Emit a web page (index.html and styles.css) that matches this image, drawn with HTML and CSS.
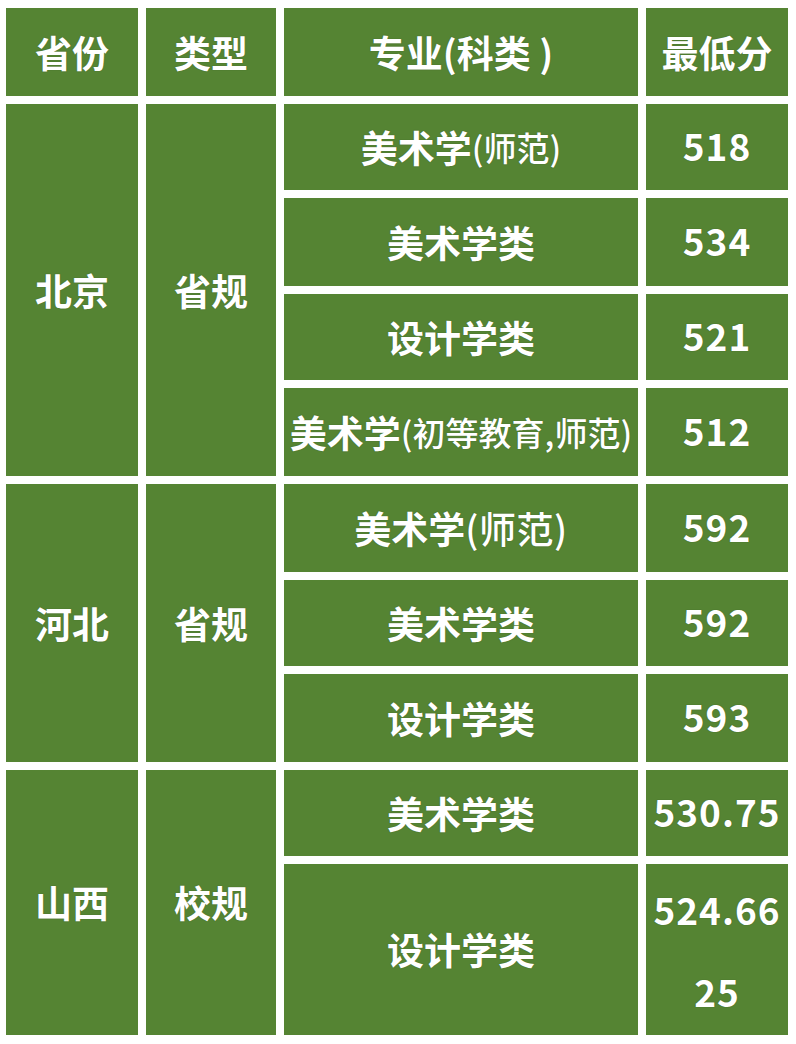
FILE: index.html
```html
<!DOCTYPE html>
<html lang="zh-CN">
<head>
<meta charset="utf-8">
<title>分数线</title>
<link rel="stylesheet" href="styles.css">
</head>
<body>
<div class="table">
  <div class="cell head">省份</div>
  <div class="cell head">类型</div>
  <div class="cell head">专业(科类 )</div>
  <div class="cell head">最低分</div>

  <div class="cell prov span4a">北京</div>
  <div class="cell prov span4b">省规</div>
  <div class="cell major">美术学<span class="sub">(师范)</span></div>
  <div class="cell num">518</div>
  <div class="cell major">美术学类</div>
  <div class="cell num">534</div>
  <div class="cell major">设计学类</div>
  <div class="cell num">521</div>
  <div class="cell major">美术学<span class="sub">(初等教育,师范)</span></div>
  <div class="cell num">512</div>

  <div class="cell prov span3a">河北</div>
  <div class="cell prov span3b">省规</div>
  <div class="cell major">美术学<span class="sub sub-wide">(师范)</span></div>
  <div class="cell num">592</div>
  <div class="cell major">美术学类</div>
  <div class="cell num">592</div>
  <div class="cell major">设计学类</div>
  <div class="cell num">593</div>

  <div class="cell prov span2a">山西</div>
  <div class="cell prov span2b">校规</div>
  <div class="cell major">美术学类</div>
  <div class="cell num">530.75</div>
  <div class="cell major">设计学类</div>
  <div class="cell num wrap">524.6625</div>
</div>
</body>
</html>
```
FILE: styles.css
```css
html, body {
  margin: 0;
  padding: 0;
  background: #ffffff;
}

body {
  padding: 8px 0 0 6px;
  font-family: "Noto Sans CJK SC", "Noto Sans", sans-serif;
}

.table {
  display: grid;
  grid-template-columns: 132px 130px 354px 142px;
  grid-template-rows: 88px 86px 88px 86px 88px 88px 86px 88px 86px 171px;
  gap: 8px;
}

.cell {
  background: #558433;
  color: #ffffff;
  font-weight: 700;
  font-size: 37px;
  display: flex;
  align-items: center;
  justify-content: center;
  text-align: center;
  line-height: 1;
  text-shadow: 0 0 1px rgba(30, 50, 20, 0.6);
}

.num {
  letter-spacing: 1px;
  padding-bottom: 3px;
}

.sub {
  font-size: 33px;
  font-weight: 500;
  letter-spacing: 0;
}

.sub-wide {
  font-size: 37px;
  letter-spacing: 0.5px;
}

.span4a { grid-column: 1; grid-row: 2 / span 4; }
.span4b { grid-column: 2; grid-row: 2 / span 4; }
.span3a { grid-column: 1; grid-row: 6 / span 3; }
.span3b { grid-column: 2; grid-row: 6 / span 3; }
.span2a { grid-column: 1; grid-row: 9 / span 2; }
.span2b { grid-column: 2; grid-row: 9 / span 2; }

.wrap {
  word-break: break-all;
  line-height: 82px;
  padding: 0;
}
```
